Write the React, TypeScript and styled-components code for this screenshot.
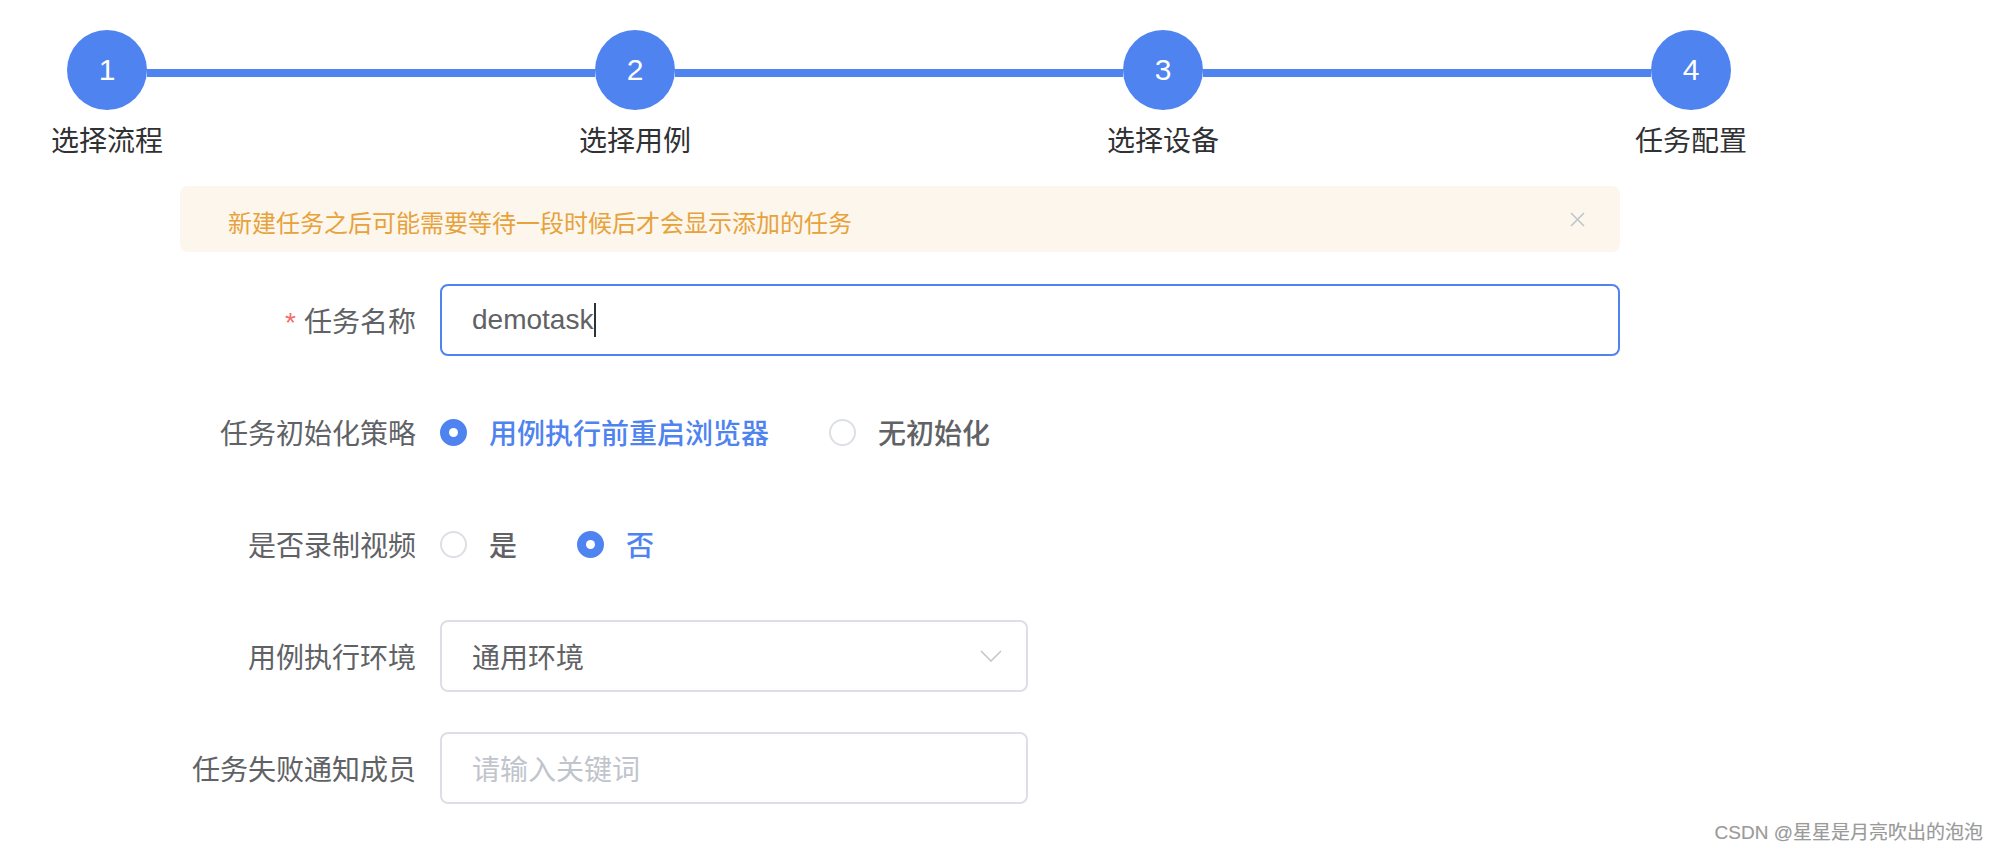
import React from "react";
import styled, { createGlobalStyle } from "styled-components";

const BLUE = "#4e83f0";

const Global = createGlobalStyle`
  html, body { margin: 0; padding: 0; background: #fff; }
  body {
    font-family: "Liberation Sans", "Noto Sans CJK SC", sans-serif;
    width: 2000px;
    height: 850px;
    overflow: hidden;
  }
`;

const Page = styled.div`
  position: relative;
  width: 2000px;
  height: 850px;
  padding-top: 30px;
  box-sizing: border-box;
`;

const Steps = styled.div`
  display: flex;
  padding-left: 67px;
`;

const Step = styled.div<{ $last?: boolean }>`
  display: flex;
  width: ${(p) => (p.$last ? "auto" : "528px")};
  flex-shrink: 0;
`;

const StepHead = styled.div`
  display: flex;
  flex-direction: column;
  align-items: center;
  width: 80px;
  flex-shrink: 0;
`;

const Circle = styled.div`
  width: 80px;
  height: 80px;
  border-radius: 50%;
  background: ${BLUE};
  color: #fff;
  display: flex;
  align-items: center;
  justify-content: center;
  font-size: 30px;
  font-family: "Liberation Sans", sans-serif;
`;

const StepLine = styled.div`
  flex: 1;
  height: 8px;
  margin-top: 39px;
  background: ${BLUE};
`;

const StepTitle = styled.div`
  margin-top: 9px;
  font-size: 28px;
  line-height: 40px;
  color: #303133;
  white-space: nowrap;
  font-family: "Noto Sans CJK SC", sans-serif;
`;

const Form = styled.div`
  margin-left: 180px;
  width: 1440px;
  margin-top: 27px;
`;

const Alert = styled.div`
  height: 66px;
  box-sizing: border-box;
  background: #fdf6ec;
  border-radius: 8px;
  display: flex;
  align-items: center;
  justify-content: space-between;
  padding: 4px 35px 0 48px;
  color: #e6a23c;
  font-size: 24px;
  font-family: "Noto Sans CJK SC", sans-serif;
  margin-bottom: 32px;
`;

const CloseIcon = styled.svg`
  width: 15px;
  height: 15px;
  margin-top: -4px;
`;

const FormItem = styled.div`
  display: flex;
  align-items: center;
  height: 72px;
  margin-bottom: 40px;
`;

const Label = styled.div`
  width: 260px;
  box-sizing: border-box;
  padding-right: 24px;
  text-align: right;
  font-size: 28px;
  color: #606266;
  font-family: "Noto Sans CJK SC", sans-serif;
  white-space: nowrap;
`;

const Star = styled.span`
  color: #f56c6c;
  margin-right: 8px;
  font-family: "Liberation Sans", sans-serif;
`;

const InputBox = styled.div<{ $focused?: boolean; $width?: string }>`
  width: ${(p) => p.$width ?? "auto"};
  flex: ${(p) => (p.$width ? "none" : "1")};
  height: 72px;
  box-sizing: border-box;
  border: 2px solid ${(p) => (p.$focused ? BLUE : "#dcdfe6")};
  border-radius: 8px;
  padding: 0 24px 0 30px;
  display: flex;
  align-items: center;
  justify-content: space-between;
  font-size: 28px;
  color: #606266;
  font-family: "Liberation Sans", "Noto Sans CJK SC", sans-serif;
`;

const ValueText = styled.span`
  display: flex;
  align-items: center;
`;

const Caret = styled.span`
  display: inline-block;
  width: 2px;
  height: 34px;
  background: #303133;
  margin-left: 1px;
`;

const Placeholder = styled.span`
  color: #c0c4cc;
  font-family: "Noto Sans CJK SC", sans-serif;
`;

const Chevron = styled.svg`
  width: 22px;
  height: 12px;
`;

const RadioGroup = styled.div`
  display: flex;
  align-items: center;
`;

const RadioItem = styled.div`
  display: flex;
  align-items: center;
  margin-right: 60px;
`;

const RadioDot = styled.span<{ $checked?: boolean }>`
  width: 27px;
  height: 27px;
  box-sizing: border-box;
  border-radius: 50%;
  border: 2px solid ${(p) => (p.$checked ? BLUE : "#dcdfe6")};
  background: ${(p) => (p.$checked ? BLUE : "#fff")};
  display: flex;
  align-items: center;
  justify-content: center;
  &::after {
    content: "";
    width: 9px;
    height: 9px;
    border-radius: 50%;
    background: #fff;
    display: ${(p) => (p.$checked ? "block" : "none")};
  }
`;

const RadioText = styled.span<{ $checked?: boolean }>`
  margin-left: 22px;
  font-size: 28px;
  font-weight: 500;
  color: ${(p) => (p.$checked ? BLUE : "#606266")};
  font-family: "Noto Sans CJK SC", sans-serif;
`;

const Watermark = styled.div`
  position: absolute;
  right: 17px;
  bottom: 6px;
  font-size: 19px;
  color: #9a9a9a;
  text-shadow: 0 0 1px #e0e0e0;
  font-family: "Liberation Sans", "Noto Sans CJK SC", sans-serif;
`;

const steps = ["选择流程", "选择用例", "选择设备", "任务配置"];

function Radio({ checked, children }: { checked?: boolean; children: React.ReactNode }) {
  return (
    <RadioItem>
      <RadioDot $checked={checked} />
      <RadioText $checked={checked}>{children}</RadioText>
    </RadioItem>
  );
}

export default function App() {
  return (
    <>
      <Global />
      <Page>
        <Steps>
          {steps.map((s, i) => (
            <Step key={s} $last={i === steps.length - 1}>
              <StepHead>
                <Circle>{i + 1}</Circle>
                <StepTitle>{s}</StepTitle>
              </StepHead>
              {i < steps.length - 1 && <StepLine />}
            </Step>
          ))}
        </Steps>
        <Form>
          <Alert>
            <span>新建任务之后可能需要等待一段时候后才会显示添加的任务</span>
            <CloseIcon viewBox="0 0 15 15">
              <path d="M1 1 L14 14 M14 1 L1 14" stroke="#c0c4cc" strokeWidth="1.6" fill="none" />
            </CloseIcon>
          </Alert>
          <FormItem>
            <Label>
              <Star>*</Star>任务名称
            </Label>
            <InputBox $focused>
              <ValueText>
                demotask
                <Caret />
              </ValueText>
            </InputBox>
          </FormItem>
          <FormItem>
            <Label>任务初始化策略</Label>
            <RadioGroup>
              <Radio checked>用例执行前重启浏览器</Radio>
              <Radio>无初始化</Radio>
            </RadioGroup>
          </FormItem>
          <FormItem>
            <Label>是否录制视频</Label>
            <RadioGroup>
              <Radio>是</Radio>
              <Radio checked>否</Radio>
            </RadioGroup>
          </FormItem>
          <FormItem>
            <Label>用例执行环境</Label>
            <InputBox $width="588px">
              <ValueText>通用环境</ValueText>
              <Chevron viewBox="0 0 22 12">
                <path d="M1 1 L11 11 L21 1" stroke="#c0c4cc" strokeWidth="1.5" fill="none" />
              </Chevron>
            </InputBox>
          </FormItem>
          <FormItem>
            <Label>任务失败通知成员</Label>
            <InputBox $width="588px">
              <Placeholder>请输入关键词</Placeholder>
            </InputBox>
          </FormItem>
        </Form>
        <Watermark>CSDN @星星是月亮吹出的泡泡</Watermark>
      </Page>
    </>
  );
}
